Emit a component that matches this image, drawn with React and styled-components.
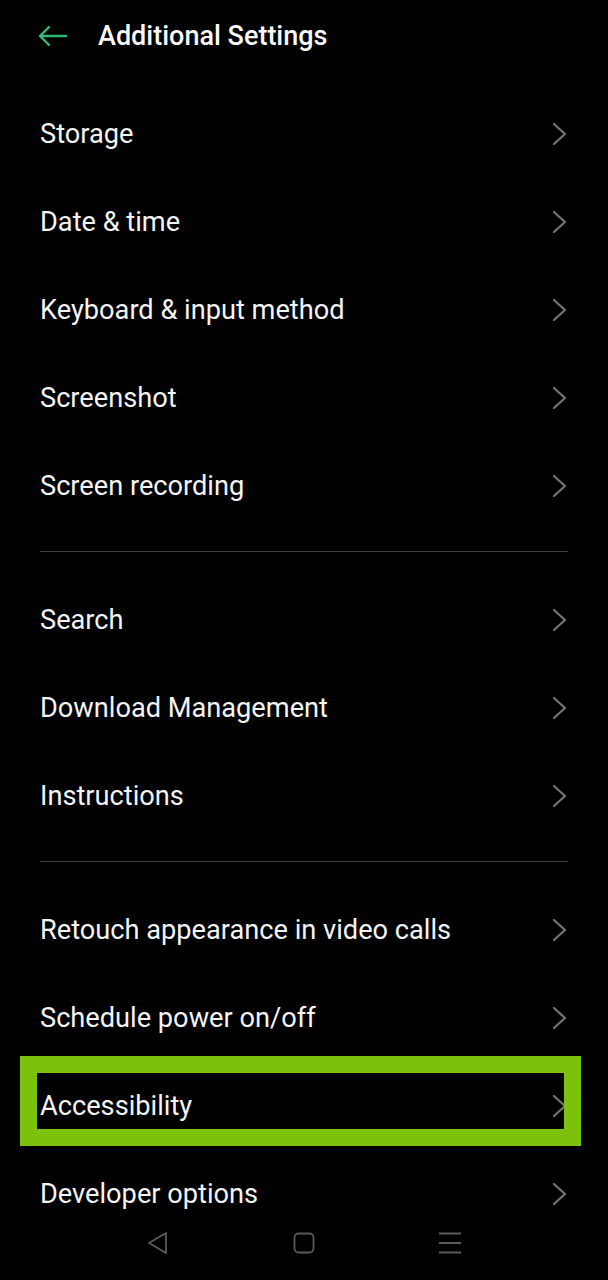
import React from "react";
import styled, { createGlobalStyle } from "styled-components";

const Global = createGlobalStyle`
  html, body { margin: 0; padding: 0; background: #000; }
  body { font-family: Roboto, "Noto Sans", "Liberation Sans", sans-serif; -webkit-font-smoothing: antialiased; }
`;

const Screen = styled.div`
  position: relative;
  width: 608px;
  height: 1280px;
  background: #000;
  overflow: hidden;
`;

const Header = styled.header`
  height: 72px;
  display: flex;
  align-items: center;
  padding-left: 37px;
  gap: 30px;
`;

const BackIcon = styled.svg`
  width: 31px;
  height: 24px;
  flex: none;
`;

const Title = styled.h1`
  margin: 0;
  color: #fafafa;
  font-size: 27px;
  font-weight: 500;
`;

const List = styled.div`
  padding-top: 17px;
  display: flex;
  flex-direction: column;
`;

const Row = styled.div`
  position: relative;
  box-sizing: border-box;
  height: 88px;
  display: flex;
  align-items: center;
  justify-content: space-between;
  padding: 2px 40px 0 40px;
`;

const Label = styled.span`
  color: #f4f4f4;
  font-size: 27.2px;
  font-weight: 400;
`;

const Chevron = styled.svg`
  width: 16px;
  height: 22px;
  flex: none;
`;

const Divider = styled.hr`
  margin: 22px 40px 23px 40px;
  border: 0;
  height: 1px;
  background: #3c3c3c;
`;

const Highlight = styled.div`
  position: absolute;
  top: -5px;
  left: 20px;
  right: 27px;
  bottom: 3px;
  border: 17px solid #7cc10c;
  pointer-events: none;
`;

const NavBar = styled.nav`
  position: absolute;
  left: 0;
  right: 0;
  bottom: 0;
  height: 74px;
  display: flex;
  align-items: center;
  justify-content: center;
`;

const NavSlot = styled.div`
  width: 146px;
  display: flex;
  justify-content: center;
`;

const NavIcon = styled.svg`
  width: 24px;
  height: 24px;
`;

const ChevronIcon = () => (
  <Chevron viewBox="0 0 16 22">
    <path d="M2 1 L13 11 L2 21" fill="none" stroke="#767676" strokeWidth="2.2" strokeLinecap="round" strokeLinejoin="round" />
  </Chevron>
);

const sections = [
  ["Storage", "Date & time", "Keyboard & input method", "Screenshot", "Screen recording"],
  ["Search", "Download Management", "Instructions"],
  ["Retouch appearance in video calls", "Schedule power on/off", "Accessibility", "Developer options"],
];

export default function App() {
  return (
    <>
      <Global />
      <Screen>
        <Header>
          <BackIcon viewBox="0 0 31 24">
            <path d="M29 12 H3 M12 3 L3 12 L12 21" fill="none" stroke="#33b874" strokeWidth="2.4" strokeLinecap="round" strokeLinejoin="round" />
          </BackIcon>
          <Title>Additional Settings</Title>
        </Header>
        <List>
          {sections.map((items, si) => (
            <React.Fragment key={si}>
              {si > 0 && <Divider />}
              {items.map((label) => (
                <Row key={label}>
                  <Label>{label}</Label>
                  <ChevronIcon />
                  {label === "Accessibility" && <Highlight />}
                </Row>
              ))}
            </React.Fragment>
          ))}
        </List>
        <NavBar>
          <NavSlot>
            <NavIcon viewBox="0 0 24 24">
              <path d="M20 2 L3 12 L20 22 Z" fill="none" stroke="#5a5a5a" strokeWidth="1.8" strokeLinejoin="round" />
            </NavIcon>
          </NavSlot>
          <NavSlot>
            <NavIcon viewBox="0 0 24 24">
              <rect x="2.5" y="2.5" width="19" height="19" rx="4" fill="none" stroke="#5a5a5a" strokeWidth="1.8" />
            </NavIcon>
          </NavSlot>
          <NavSlot>
            <NavIcon viewBox="0 0 24 24">
              <path d="M1 2.5 H23 M1 12 H23 M1 21.5 H23" fill="none" stroke="#5a5a5a" strokeWidth="1.8" />
            </NavIcon>
          </NavSlot>
        </NavBar>
      </Screen>
    </>
  );
}
